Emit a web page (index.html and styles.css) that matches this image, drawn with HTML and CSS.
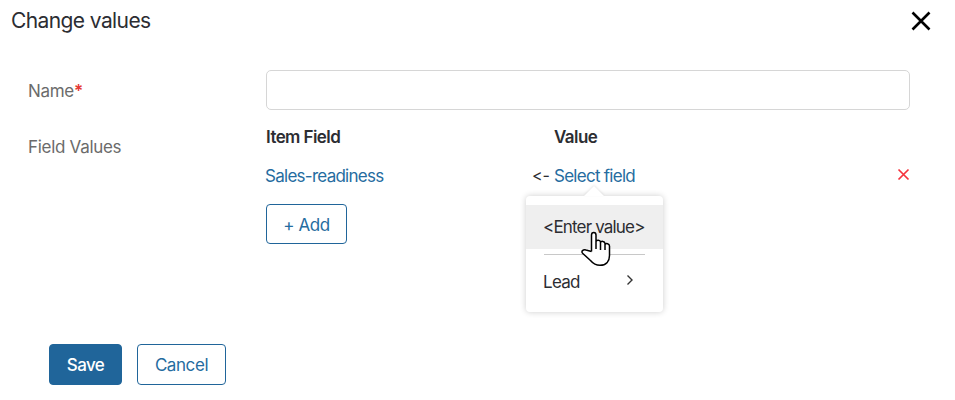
FILE: index.html
```html
<!DOCTYPE html>
<html lang="en">
<head>
<meta charset="utf-8">
<title>Change values</title>
<link rel="stylesheet" href="styles.css">
</head>
<body>
<main class="dialog">
  <header class="header">
    <h1 class="title">Change values</h1>
    <svg class="close" width="20" height="20" viewBox="0 0 20 20"><path d="M1.5 1.5 18.5 18.5M18.5 1.5 1.5 18.5"/></svg>
  </header>
  <section class="form">
    <label class="label name-label" for="name">Name<span class="required">*</span></label>
    <input class="input" id="name" type="text">
    <div class="label">Field Values</div>
    <div class="mapping">
      <div class="row heading"><span class="item-head">Item Field</span><span class="value-head">Value</span></div>
      <div class="row entry">
        <a class="link item-link">Sales-readiness</a>
        <span class="arrow">&lt;-</span>
        <div class="picker">
          <a class="link select-link">Select field</a>
          <div class="menu">
            <div class="option active"><span class="enter">&lt;Enter value&gt;</span></div>
            <div class="divider"></div>
            <div class="option"><span class="lead">Lead</span><svg class="chevron" width="8" height="12" viewBox="0 0 8 12"><path d="M1.5 1.5 6 6 1.5 10.5"/></svg></div>
          </div>
          <svg class="pointer" width="31" height="36" viewBox="0 0 31 36"><path d="M10.5 20.5V4C10.5 .5 15 .5 15 4V13V10.5C15.5 8.5 19.2 8.8 19.5 11V15V11.5C20 9.8 23.7 10 24 12.3V16V13.5C25 12 28.3 12.4 28.5 15V24.5C28.5 30.5 25 34.3 19 34.3C14.5 34.3 12 32.5 9.5 29.5L1.8 22.5C-.5 20.5 2.3 18 5 19L10.5 20.5M15 13V18M19.5 14V19M24 15V19"/></svg>
        </div>
        <svg class="remove" width="13" height="13" viewBox="0 0 13 13"><path d="M1.5 1.5 11.5 11.5M11.5 1.5 1.5 11.5"/></svg>
      </div>
      <button class="button add"><span>+ Add</span></button>
    </div>
  </section>
  <footer class="footer">
    <button class="button primary"><span>Save</span></button>
    <button class="button cancel"><span>Cancel</span></button>
  </footer>
</main>
</body>
</html>
```
FILE: styles.css
```css
* { box-sizing: border-box; }
body {
  margin: 0;
  background: #fff;
  color: #2c2d32;
  font: 400 17px/24px Inter, sans-serif;
  letter-spacing: -0.4px;
}
.dialog { height: 400px; overflow: hidden; }
.header {
  display: flex;
  justify-content: space-between;
  align-items: center;
  height: 42px;
  padding: 0 24px 0 11px;
}
.title { margin: 0; font-size: 21px; font-weight: 400; letter-spacing: -0.6px; }
svg { fill: none; }
.close { stroke: #000; stroke-width: 2.6; }
.form {
  display: grid;
  grid-template-columns: 238px 644px;
  row-gap: 15px;
  padding: 28px 0 0 28px;
}
.label { color: #6b6b6b; letter-spacing: -0.3px; }
.name-label { padding-top: 9px; }
.form > div.label { padding-top: 10px; }
.required { color: #e53935; font-weight: 600; }
.input {
  width: 644px;
  height: 40px;
  border: 1px solid #d6d6d6;
  border-radius: 5px;
  outline: 0;
  font: inherit;
}
.row { display: flex; align-items: center; height: 39px; }
.heading { height: 24px; font-weight: 600; letter-spacing: -0.58px; }
.entry { margin-top: 7px; letter-spacing: -0.73px; }
.item-head { width: 288px; }
.link { color: #256ca0; }
.item-link { width: 266px; margin-left: -1px; }
.arrow { width: 23px; padding-left: 1px; margin-top: -2px; font-size: 16px; letter-spacing: 0; font-feature-settings: "calt" 0; }
.picker { position: relative; }
.remove { margin: -2px 0 0 auto; stroke: #f5333d; stroke-width: 1.7; }
.menu {
  position: absolute;
  top: 32px;
  left: -28px;
  width: 137px;
  height: 116px;
  padding-top: 9px;
  border-radius: 4px;
  background: #fff;
  box-shadow: 0 0 6px rgb(0 0 0 / 20%);
}
.menu::before {
  content: "";
  position: absolute;
  top: -10px;
  left: 58px;
  border: solid transparent;
  border-width: 0 10px 10px;
  border-bottom-color: #fff;
  filter: drop-shadow(0 -1px 1px rgb(0 0 0 / 10%));
}
.option {
  display: flex;
  justify-content: space-between;
  align-items: center;
  height: 44px;
  padding: 0 29px 0 17px;
}
.active { padding-right: 0; background: #efefef; }
.enter { letter-spacing: -0.83px; }
.divider { height: 1px; margin: 5px 18px; background: #c8c8c8; }
.chevron { stroke: #333; stroke-width: 1.4; margin-top: -3px; }
.pointer {
  position: absolute;
  top: 67px;
  left: 27px;
}
.pointer path { fill: #fff; stroke: #000; stroke-width: 1.5; stroke-linejoin: round; }
.button {
  display: flex;
  justify-content: center;
  align-items: center;
  height: 41px;
  padding: 0;
  border: 1px solid #20659a;
  border-radius: 4px;
  background: #fff;
  color: #256ca0;
  font: inherit;
  letter-spacing: -0.5px;
}
.add { width: 81px; height: 40px; margin-top: 9px; padding-top: 2px; letter-spacing: -0.4px; }
.footer { display: flex; gap: 15px; padding: 100px 0 0 49px; }
.primary { width: 73px; background: #20659a; color: #fff; font-weight: 500; letter-spacing: -0.6px; }
.cancel { width: 89px; letter-spacing: -0.42px; }
```
